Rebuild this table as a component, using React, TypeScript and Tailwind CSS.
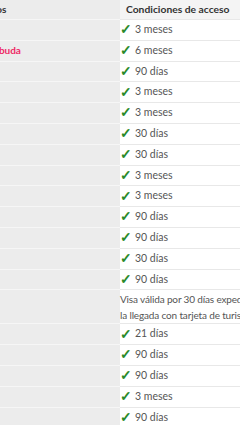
import React from "react";

const rows: { left?: string; pink?: boolean; right: string }[] = [
  { right: "3 meses" },
  { left: "Antigua y Barbuda", pink: true, right: "6 meses" },
  { right: "90 días" },
  { right: "3 meses" },
  { right: "3 meses" },
  { right: "30 días" },
  { right: "30 días" },
  { right: "3 meses" },
  { right: "3 meses" },
  { right: "90 días" },
  { right: "90 días" },
  { right: "30 días" },
  { right: "90 días" },
];

const rows2 = [
  { right: "21 días" },
  { right: "90 días" },
  { right: "90 días" },
  { right: "3 meses" },
  { right: "90 días" },
];

function Check() {
  return (
    <span className="text-[#2a8a2a] font-bold text-[13.5px] leading-none mr-[3px]">✓</span>
  );
}

function Row({ left, pink, right }: { left?: string; pink?: boolean; right: string }) {
  return (
    <div className="flex h-[20.8px] shrink-0">
      <div className="w-[120px] shrink-0 bg-[#ececec] border-t border-[#f6f6f6] overflow-hidden flex items-center">
        {left ? (
          <span
            className={`whitespace-nowrap ml-[-61px] font-bold ${pink ? "text-[#ee2a66]" : "text-[#444]"}`}
          >
            {left}
          </span>
        ) : null}
      </div>
      <div className="w-[200px] shrink-0 bg-white border-t border-[#e8e8e8] flex items-center whitespace-nowrap text-[#555] text-[10.5px]">
        <Check />
        <span>{right}</span>
      </div>
    </div>
  );
}

export default function App() {
  return (
    <div
      className="w-[240px] h-[425px] overflow-hidden bg-white text-[10px]"
      style={{ fontFamily: "Lato, 'Open Sans', sans-serif" }}
    >
      <div className="flex flex-col w-[320px]">
        <div className="flex h-[19px] shrink-0">
          <div className="w-[120px] shrink-0 bg-[#ececec] overflow-hidden flex items-center">
            <span className="whitespace-nowrap ml-[-33px] font-bold text-[#333]">Destinos</span>
          </div>
          <div className="w-[200px] shrink-0 bg-[#f4f4f4] flex items-center pl-[6px] font-bold text-[#333] whitespace-nowrap text-[10.3px]">
            Condiciones de acceso
          </div>
        </div>
        {rows.map((r, i) => (
          <Row key={i} left={r.left} pink={r.pink} right={r.right} />
        ))}
        <div className="flex h-[34px] shrink-0">
          <div className="w-[120px] shrink-0 bg-[#ececec] border-t border-[#f6f6f6]" />
          <div className="w-[200px] shrink-0 bg-white border-t border-[#e8e8e8] flex flex-col justify-center text-[#555] leading-[16px] whitespace-nowrap tracking-[-0.15px]">
            <span>Visa válida por 30 días expedida a</span>
            <span>la llegada con tarjeta de turista.</span>
          </div>
        </div>
        {rows2.map((r, i) => (
          <Row key={i} right={r.right} />
        ))}
      </div>
    </div>
  );
}
